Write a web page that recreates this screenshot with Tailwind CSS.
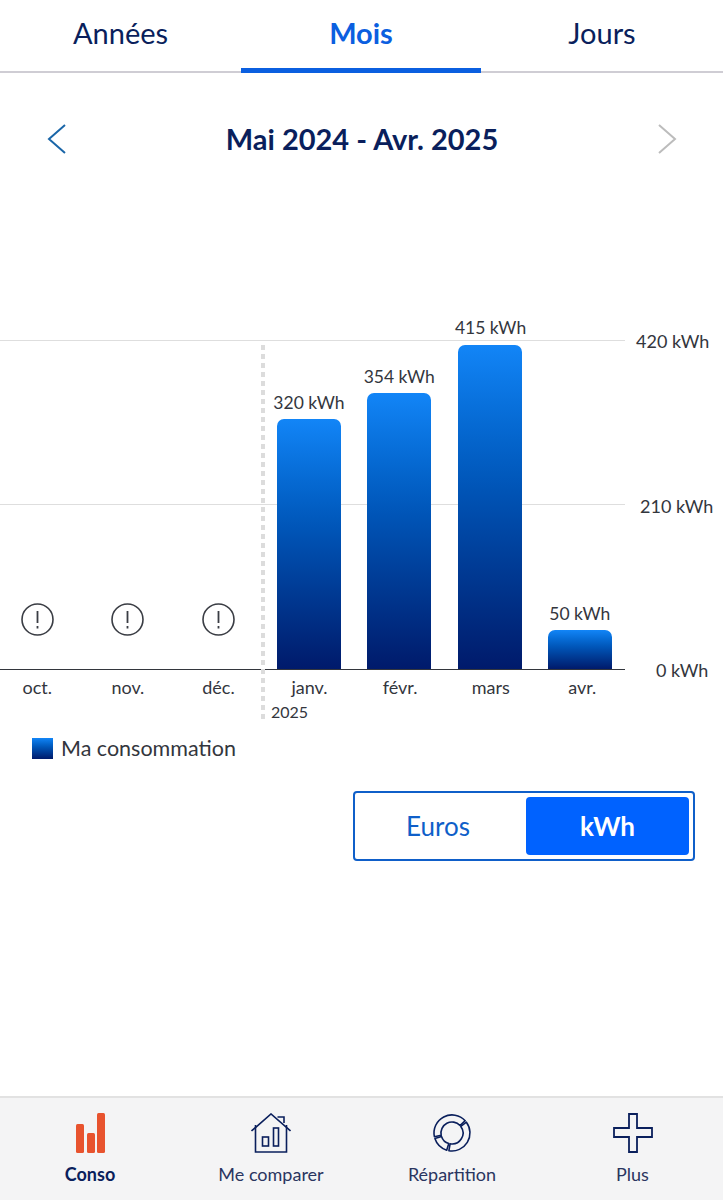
<!DOCTYPE html>
<html lang="fr">
<head>
    <meta charset="UTF-8" />
    <title>Conso</title>
    <script src="https://cdn.jsdelivr.net/npm/@tailwindcss/browser@4"></script>
</head>
<body class="bg-white w-[723px] h-[1200px] overflow-hidden flex flex-col font-['Lato',sans-serif] text-[#33363d]">

    <!-- Tabs -->
    <div class="flex h-[73px] border-b-2 border-[#cfcdd4] text-[29px] text-[#0a1f5c] shrink-0">
        <div class="w-[241px] h-[73px] flex items-center justify-center pb-[7px]">Années</div>
        <div class="w-[240px] h-[73px] flex items-center justify-center pb-[2px] font-bold text-[#0b5fe0] border-b-[5px] border-[#0b5fe0]">Mois</div>
        <div class="w-[242px] h-[73px] flex items-center justify-center pb-[7px]">Jours</div>
    </div>

    <!-- Period nav -->
    <div class="flex items-center justify-between h-[132px] pl-[46px] pr-[45px] pb-[1px] shrink-0">
        <svg width="22" height="30" viewBox="0 0 22 30" fill="none" stroke="#1a66a8" stroke-width="2"><path d="M19 1 L3 15 L19 29" /></svg>
        <div class="text-[29px] font-bold text-[#0a1f5c]">Mai 2024 - Avr. 2025</div>
        <svg width="22" height="30" viewBox="0 0 22 30" fill="none" stroke="#bcbcbc" stroke-width="2"><path d="M3 1 L19 15 L3 29" /></svg>
    </div>

    <!-- Chart -->
    <div class="relative h-[515px] shrink-0">
        <!-- grid lines and y axis -->
        <div class="absolute left-0 top-[135px] w-[625px] border-t border-[#dedede]"></div>
        <div class="absolute left-0 top-[299px] w-[625px] border-t border-[#dedede]"></div>
        <div class="absolute left-[636px] top-[124px] text-[18px] leading-[24px] text-[#33363d]">420 kWh</div>
        <div class="absolute left-[640px] top-[289px] text-[18px] leading-[24px] text-[#33363d]">210 kWh</div>
        <div class="absolute left-[656px] top-[453px] text-[18px] leading-[24px] text-[#33363d]">0 kWh</div>
        <!-- year separator -->
        <div class="absolute z-10 left-[261px] top-[140px] h-[375px] w-[4px] bg-[repeating-linear-gradient(to_bottom,#dcdcdc_0,#dcdcdc_5px,transparent_5px,transparent_9px)]"></div>
        <div class="absolute left-[271px] top-[495px] text-[16px] leading-[24px]">2025</div>

        <!-- bars -->
        <div class="absolute left-[-7px] top-0 w-[632px] h-[465px] flex border-b border-[#33363d]">
            <div class="w-[90.6px] flex flex-col items-center justify-end">
                <svg class="mb-[33px] -ml-[2px]" width="33" height="33" viewBox="0 0 33 33" fill="none" stroke="#3a3d44"><circle cx="16.5" cy="16.5" r="15.5" stroke-width="1.6" /><path d="M16.5 8 V20 M16.5 23 V25.5" stroke-width="1.8" /></svg>
            </div>
            <div class="w-[90.6px] flex flex-col items-center justify-end">
                <svg class="mb-[33px] -ml-[2px]" width="33" height="33" viewBox="0 0 33 33" fill="none" stroke="#3a3d44"><circle cx="16.5" cy="16.5" r="15.5" stroke-width="1.6" /><path d="M16.5 8 V20 M16.5 23 V25.5" stroke-width="1.8" /></svg>
            </div>
            <div class="w-[90.6px] flex flex-col items-center justify-end">
                <svg class="mb-[33px]" width="33" height="33" viewBox="0 0 33 33" fill="none" stroke="#3a3d44"><circle cx="16.5" cy="16.5" r="15.5" stroke-width="1.6" /><path d="M16.5 8 V20 M16.5 23 V25.5" stroke-width="1.8" /></svg>
            </div>
            <div class="w-[90.6px] flex flex-col items-center justify-end">
                <div class="text-[17.5px] leading-[24px] mb-[4px] whitespace-nowrap">320 kWh</div>
                <div class="w-[64px] h-[250px] rounded-t-[7px] bg-gradient-to-b from-[#1285f7] to-[#001a6b]"></div>
            </div>
            <div class="w-[90.6px] flex flex-col items-center justify-end">
                <div class="text-[17.5px] leading-[24px] mb-[4px] whitespace-nowrap">354 kWh</div>
                <div class="w-[64px] h-[276px] rounded-t-[7px] bg-gradient-to-b from-[#1285f7] to-[#001a6b]"></div>
            </div>
            <div class="w-[90.6px] flex flex-col items-center justify-end">
                <div class="text-[17.5px] leading-[24px] mb-[5px] whitespace-nowrap pl-[2px]">415 kWh</div>
                <div class="w-[64px] h-[324px] rounded-t-[7px] bg-gradient-to-b from-[#1285f7] to-[#001a6b]"></div>
            </div>
            <div class="w-[90.6px] flex flex-col items-center justify-end">
                <div class="text-[17.5px] leading-[24px] mb-[4px] whitespace-nowrap">50 kWh</div>
                <div class="w-[64px] h-[39px] rounded-t-[7px] bg-gradient-to-b from-[#1285f7] to-[#001a6b]"></div>
            </div>
        </div>

        <!-- month labels -->
        <div class="absolute left-[-8px] top-[470px] w-[634px] flex text-[18px] leading-[24px] text-center">
            <div class="w-[90.6px]">oct.</div>
            <div class="w-[90.6px]">nov.</div>
            <div class="w-[90.6px]">déc.</div>
            <div class="w-[90.6px] pl-[1px]">janv.</div>
            <div class="w-[90.6px] pl-[1px]">févr.</div>
            <div class="w-[90.6px] pl-[1px]">mars</div>
            <div class="w-[90.6px] pl-[3px]">avr.</div>
        </div>
    </div>

    <!-- Legend -->
    <div class="flex items-center gap-2 pl-[32px] h-[22px] mt-[17px] text-[21.5px] shrink-0">
        <div class="w-[21px] h-[21px] bg-gradient-to-b from-[#1285f7] to-[#001a6b]"></div>
        <span>Ma consommation</span>
    </div>

    <!-- Unit toggle -->
    <div class="flex justify-end pr-[28px] mt-[32px] shrink-0">
        <div class="w-[342px] h-[70px] border-2 border-[#0f5fc9] rounded-[4px] flex items-stretch justify-between p-[4px] text-[26px]">
            <div class="w-[158px] flex items-center justify-center pt-[1px] text-[#0f5fc9]">Euros</div>
            <div class="w-[163px] flex items-center justify-center pt-[1px] bg-[#0062ff] text-white font-bold rounded-[4px]">kWh</div>
        </div>
    </div>

    <!-- Bottom bar -->
    <div class="mt-auto h-[104px] bg-[#f4f4f5] border-t-2 border-[#e2e2e2] flex text-[18px] text-[#2a3560] shrink-0">
        <div class="w-[180px] flex flex-col items-center pt-[15px]">
            <svg width="40" height="40" viewBox="0 0 40 40" fill="#e8532e"><rect x="6" y="11" width="8" height="29" rx="1.5" /><rect x="17" y="20" width="8" height="20" rx="1.5" /><rect x="27" y="0" width="8" height="40" rx="1.5" /></svg>
            <div class="mt-[8px] font-bold text-[#0a1f5c]">Conso</div>
        </div>
        <div class="w-[182px] flex flex-col items-center pt-[15px]">
            <svg width="40" height="40" viewBox="0 0 40 40" fill="none" stroke="#0a1f5c" stroke-width="1.6"><path d="M0.5 18 L20 1 L39.5 18" /><path d="M26.5 4 H33 V10" /><path d="M4.5 12 V39 H35.5 V12" /><rect x="11.5" y="24" width="6" height="9" /><rect x="22.5" y="15" width="5" height="18" /></svg>
            <div class="mt-[8px]">Me comparer</div>
        </div>
        <div class="w-[180px] flex flex-col items-center pt-[15px]">
            <svg width="40" height="40" viewBox="0 0 40 40" fill="none" stroke="#0a1f5c" stroke-width="1.6" stroke-linejoin="round"><path d="M2.4 23.7 A18 18 0 0 1 33.2 7.7 L28 12.5 A11 11 0 0 0 9.2 22.3 Z" /><path d="M34.4 9.2 A18 18 0 0 1 16.9 37.7 L18.1 30.8 A11 11 0 0 0 28.8 13.4 Z" /><path d="M14.7 37.2 A18 18 0 0 1 2.9 25.6 L9.5 23.4 A11 11 0 0 0 16.8 30.5 Z" /></svg>
            <div class="mt-[8px]">Répartition</div>
        </div>
        <div class="w-[181px] flex flex-col items-center pt-[15px]">
            <svg width="40" height="40" viewBox="0 0 40 40" fill="none" stroke="#0a1f5c" stroke-width="1.8"><path d="M16 1 H24 V15 H39 V24 H24 V39 H16 V24 H1 V15 H16 Z" /></svg>
            <div class="mt-[8px]">Plus</div>
        </div>
    </div>
</body>
</html>
